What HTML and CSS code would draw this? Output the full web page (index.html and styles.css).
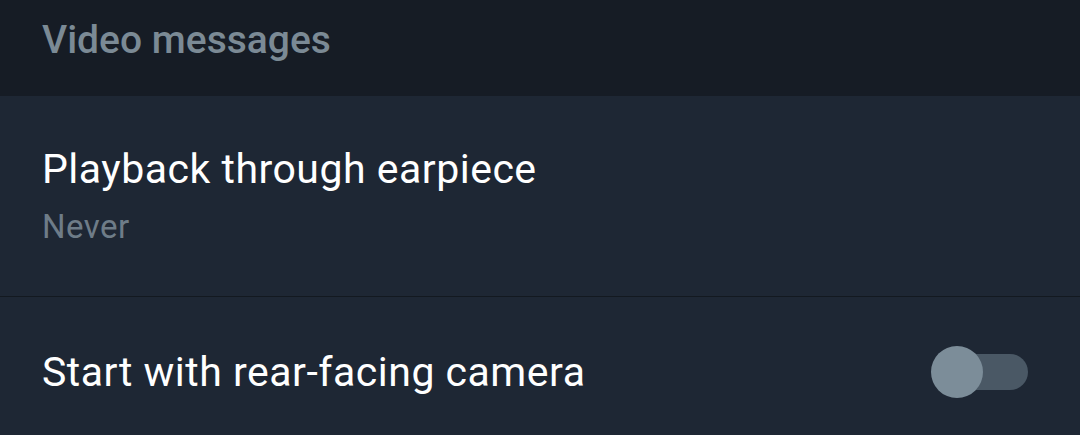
FILE: index.html
```html
<!DOCTYPE html>
<html>
<head>
<meta charset="utf-8">
<link rel="stylesheet" href="styles.css">
</head>
<body>
<div class="screen">
  <div class="section-header">Video messages</div>
  <div class="row row-two">
    <div class="title">Playback through earpiece</div>
    <div class="subtitle">Never</div>
  </div>
  <div class="divider"></div>
  <div class="row row-switch">
    <div class="title">Start with rear-facing camera</div>
    <div class="switch"><div class="track"></div><div class="knob"></div></div>
  </div>
</div>
</body>
</html>
```
FILE: styles.css
```css
html, body { margin: 0; padding: 0; }
body { background: #1e2734; font-family: Roboto, "Noto Sans", sans-serif; }
.screen { width: 1080px; height: 435px; overflow: hidden; display: flex; flex-direction: column; }
.section-header {
  height: 96px; background: #161c25; color: #7b8a95;
  font-weight: 500; font-size: 39px; line-height: 1;
  padding: 21px 0 0 42px; box-sizing: border-box;
}
.row { background: #1e2734; padding-left: 42px; box-sizing: border-box; }
.row-two { height: 200px; padding-top: 49px; }
.title { color: #ffffff; font-size: 41px; line-height: 48px; letter-spacing: 0.5px; }
.subtitle { color: #6e7c88; font-size: 33px; line-height: 38px; letter-spacing: 0.5px; margin-top: 15px; }
.divider { height: 1px; background: #131920; }
.row-switch { flex: 1; display: flex; align-items: center; justify-content: space-between; padding-right: 52px; padding-top: 11px; }
.switch { position: relative; width: 97px; height: 52px; }
.track { position: absolute; left: 9px; top: 8px; width: 88px; height: 36px; border-radius: 18px; background: #4a5865; }
.knob { position: absolute; left: 0; top: 0; width: 52px; height: 52px; border-radius: 50%; background: #7c8d99; }
```
